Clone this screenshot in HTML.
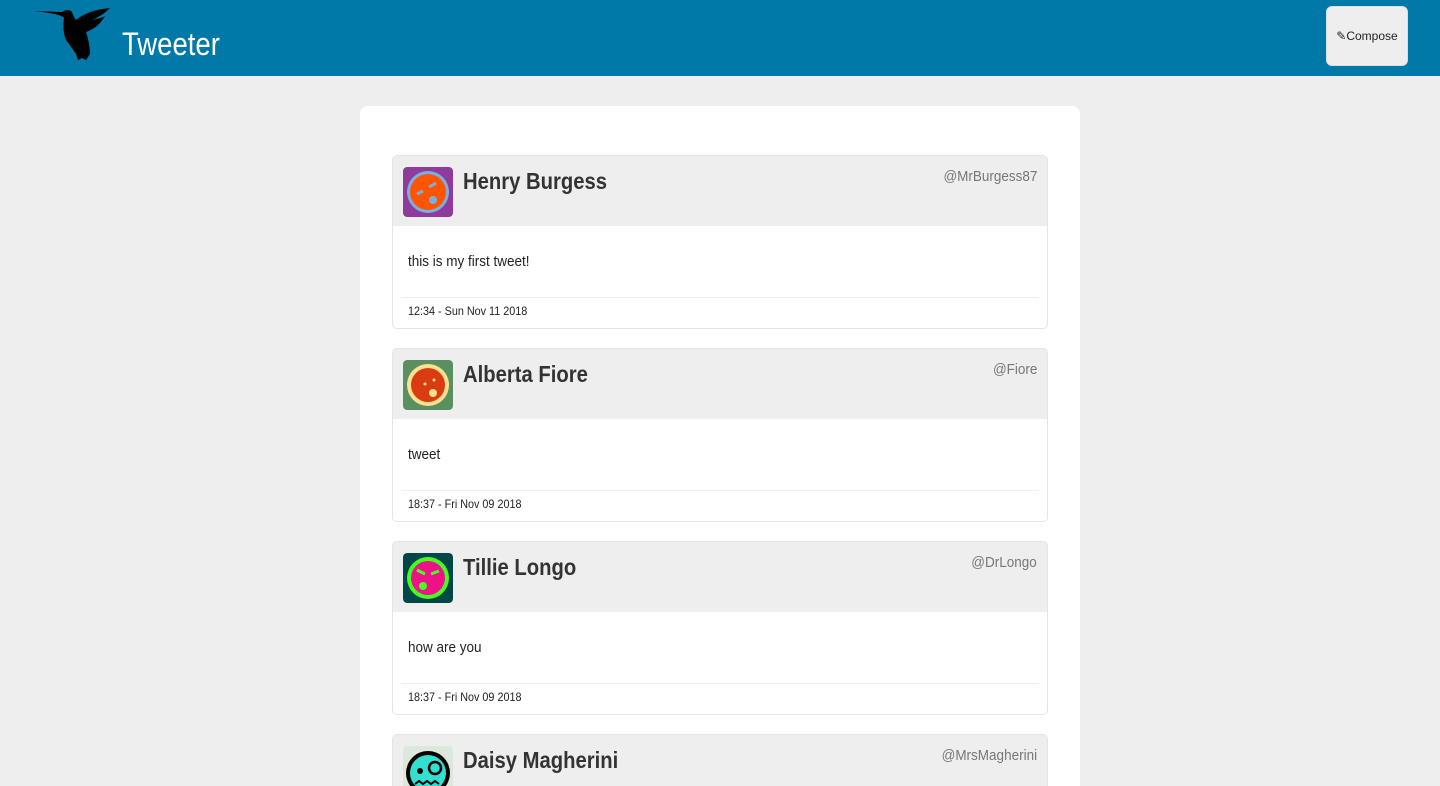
<!DOCTYPE html>
<html style="overflow:hidden;height:786px"><head><style>
html,body{margin:0;overflow:hidden}
body{background:#eee;font-family:"Liberation Sans",sans-serif;width:1440px;height:786px;position:relative}
.nav{position:absolute;left:0;top:0;width:1440px;height:76px;background:#0079a8}
.title{position:absolute;left:122px;top:26px;color:#fff;font-size:32px;transform:scaleX(.86);transform-origin:left}
.btn{position:absolute;left:1326px;top:6px;width:80px;height:58px;background:#eee;border:1px solid #ddd;border-radius:6px;font-size:12px;line-height:58px;text-align:center;color:#222}
.main{position:absolute;left:360px;top:106px;width:720px;height:680px;background:#fff;border-radius:8px 8px 0 0}
.tw{position:absolute;left:392px;width:654px;height:172px;border:1px solid #e4e4e4;border-radius:5px;background:#fff;overflow:hidden}
.hd{height:70px;background:#eee;position:relative}
.av{position:absolute;left:10px;top:11px;width:50px;height:50px;border-radius:4px}
.nm{position:absolute;left:70px;top:12px;font-size:23px;font-weight:bold;color:#333;transform:scaleX(.88);transform-origin:left}
.hn{position:absolute;right:10px;top:12px;font-size:15px;color:#777;transform:scaleX(.9);transform-origin:right}
.tx{position:absolute;left:15px;top:97px;font-size:15px;color:#222;transform:scaleX(.9);transform-origin:left}
.ln{position:absolute;left:8px;right:8px;top:141px;border-top:1px solid #eee}
.ft{position:absolute;left:15px;top:148px;font-size:12px;color:#222;transform:scaleX(.9);transform-origin:left}
</style></head><body>
<div class="nav">
<svg style="position:absolute;left:32px;top:4px" width="80" height="58" viewBox="0 0 80 58">
<path d="M2 7 L30 8 Q36 4 40 8 Q42 14 44 16 Q56 6 78 4 Q70 12 60 16 Q70 14 73 12 Q66 24 54 28 Q58 40 58 50 L54 56 L50 54 L46 56 L44 50 Q40 44 34 36 Q30 26 32 14 Q30 10 2 7Z" fill="#000"/>
</svg>
<div class="title">Tweeter</div>
<div class="btn">&#9998;Compose</div>
</div>
<div class="main"></div>

<div class="tw" style="top:155px"><div class="hd">
<svg class="av" viewBox="0 0 50 50"><rect width="50" height="50" rx="4" fill="#8e3b9b"/><circle cx="25" cy="25" r="21" fill="#7ab0e0"/><circle cx="25" cy="25" r="18" fill="#ff5500"/><path d="M14 27 L20 24 M26 20 L33 16" stroke="#7ab0e0" stroke-width="3"/><circle cx="30" cy="33" r="4" fill="#7ab0e0"/></svg>
<div class="nm">Henry Burgess</div><div class="hn">@MrBurgess87</div></div>
<div class="tx">this is my first tweet!</div><div class="ln"></div><div class="ft">12:34 - Sun Nov 11 2018</div></div>

<div class="tw" style="top:348px"><div class="hd">
<svg class="av" viewBox="0 0 50 50"><rect width="50" height="50" rx="4" fill="#5a9060"/><circle cx="25" cy="25" r="21" fill="#ffe090"/><circle cx="25" cy="25" r="17" fill="#d83c10"/><circle cx="30" cy="33" r="4" fill="#ffe090"/><circle cx="31" cy="20" r="1.5" fill="#ffe090"/><circle cx="22" cy="24" r="1.5" fill="#ffe090"/></svg>
<div class="nm">Alberta Fiore</div><div class="hn">@Fiore</div></div>
<div class="tx">tweet</div><div class="ln"></div><div class="ft">18:37 - Fri Nov 09 2018</div></div>

<div class="tw" style="top:541px"><div class="hd">
<svg class="av" viewBox="0 0 50 50"><rect width="50" height="50" rx="4" fill="#004848"/><circle cx="25" cy="25" r="21" fill="#44ff22"/><circle cx="25" cy="25" r="17" fill="#ee1188"/><path d="M14 17 l8 4 M28 21 l8 -3" stroke="#44ff22" stroke-width="3"/><circle cx="20" cy="33" r="4" fill="#44ff22"/></svg>
<div class="nm">Tillie Longo</div><div class="hn">@DrLongo</div></div>
<div class="tx">how are you</div><div class="ln"></div><div class="ft">18:37 - Fri Nov 09 2018</div></div>

<div class="tw" style="top:734px;height:60px"><div class="hd">
<svg class="av" viewBox="0 0 50 50"><rect width="50" height="50" rx="4" fill="#dde8dd"/><circle cx="25" cy="27" r="22" fill="#000"/><circle cx="25" cy="27" r="18" fill="#33e0d0"/><circle cx="17" cy="25" r="3" fill="#000"/><circle cx="32" cy="22" r="6" fill="none" stroke="#000" stroke-width="2.5"/><path d="M12 38 l4 -3 4 3 4 -3 4 3 4 -3 4 3" stroke="#000" stroke-width="2" fill="none"/></svg>
<div class="nm">Daisy Magherini</div><div class="hn">@MrsMagherini</div></div></div>
</body></html>
